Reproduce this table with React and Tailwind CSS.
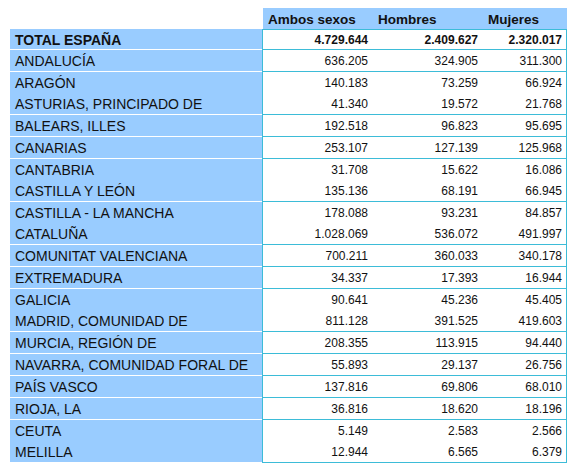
import React from 'react';

const groups = [
    [['TOTAL ESPAÑA', '4.729.644', '2.409.627', '2.320.017']],
    [['ANDALUCÍA', '636.205', '324.905', '311.300']],
    [
        ['ARAGÓN', '140.183', '73.259', '66.924'],
        ['ASTURIAS, PRINCIPADO DE', '41.340', '19.572', '21.768'],
    ],
    [['BALEARS, ILLES', '192.518', '96.823', '95.695']],
    [['CANARIAS', '253.107', '127.139', '125.968']],
    [
        ['CANTABRIA', '31.708', '15.622', '16.086'],
        ['CASTILLA Y LEÓN', '135.136', '68.191', '66.945'],
    ],
    [
        ['CASTILLA - LA MANCHA', '178.088', '93.231', '84.857'],
        ['CATALUÑA', '1.028.069', '536.072', '491.997'],
    ],
    [['COMUNITAT VALENCIANA', '700.211', '360.033', '340.178']],
    [['EXTREMADURA', '34.337', '17.393', '16.944']],
    [
        ['GALICIA', '90.641', '45.236', '45.405'],
        ['MADRID, COMUNIDAD DE', '811.128', '391.525', '419.603'],
    ],
    [['MURCIA, REGIÓN DE', '208.355', '113.915', '94.440']],
    [['NAVARRA, COMUNIDAD FORAL DE', '55.893', '29.137', '26.756']],
    [['PAÍS VASCO', '137.816', '69.806', '68.010']],
    [['RIOJA, LA', '36.816', '18.620', '18.196']],
    [
        ['CEUTA', '5.149', '2.583', '2.566'],
        ['MELILLA', '12.944', '6.565', '6.379'],
    ],
];

const Row = ({ row, bold, first }) => (
    <div className={`flex ${first ? 'h-[19px]' : 'h-[21px]'}`}>
        <div className={`w-[252px] bg-[#99ccff] pl-[5px] ${first ? 'pt-[1px]' : 'pt-[2px]'} text-[14px] leading-[18px] text-[#111] whitespace-nowrap ${bold ? 'font-bold' : ''}`}>
            {row[0]}
        </div>
        <div className={`flex border-l border-r border-[#3dbcd8] bg-white ${first ? 'pt-[1px]' : 'pt-[2px]'} text-[12px] leading-[18px] text-[#111] ${bold ? 'font-bold' : ''}`}>
            <div className="w-[109px] pr-[4px] text-right">{row[1]}</div>
            <div className="w-[110px] pr-[4px] text-right">{row[2]}</div>
            <div className="w-[84px] pr-[4px] text-right">{row[3]}</div>
        </div>
    </div>
);

export default function App() {
    return (
        <div className="bg-white w-[575px] h-[471px] pt-[8px] pl-[10px] font-['Liberation_Sans',Arial,sans-serif]">
            <div className="ml-[253px] flex h-[21px] w-[304px] bg-[#99ccff] pt-[3px] text-[13.5px] font-bold leading-[17px] text-[#111]">
                <div className="w-[109px] pl-[5px]">Ambos sexos</div>
                <div className="w-[110px] pl-[6px]">Hombres</div>
                <div className="w-[85px] pl-[6px]">Mujeres</div>
            </div>
            <div className="flex flex-col">
                {groups.map((group, gi) => (
                    <div key={gi} className="flex flex-col">
                        <div className="flex h-[1px]">
                            <div className={`w-[252px] ${gi === 0 ? 'bg-[#99ccff]' : 'bg-white'}`} />
                            <div className="w-[305px] bg-[#3dbcd8]" />
                        </div>
                        {group.map((row, ri) => (
                            <Row key={ri} row={row} bold={gi === 0} first={gi === 0} />
                        ))}
                    </div>
                ))}
                <div className="flex h-[1px]">
                    <div className="w-[252px]" />
                    <div className="w-[305px] bg-[#3dbcd8]" />
                </div>
            </div>
        </div>
    );
}
